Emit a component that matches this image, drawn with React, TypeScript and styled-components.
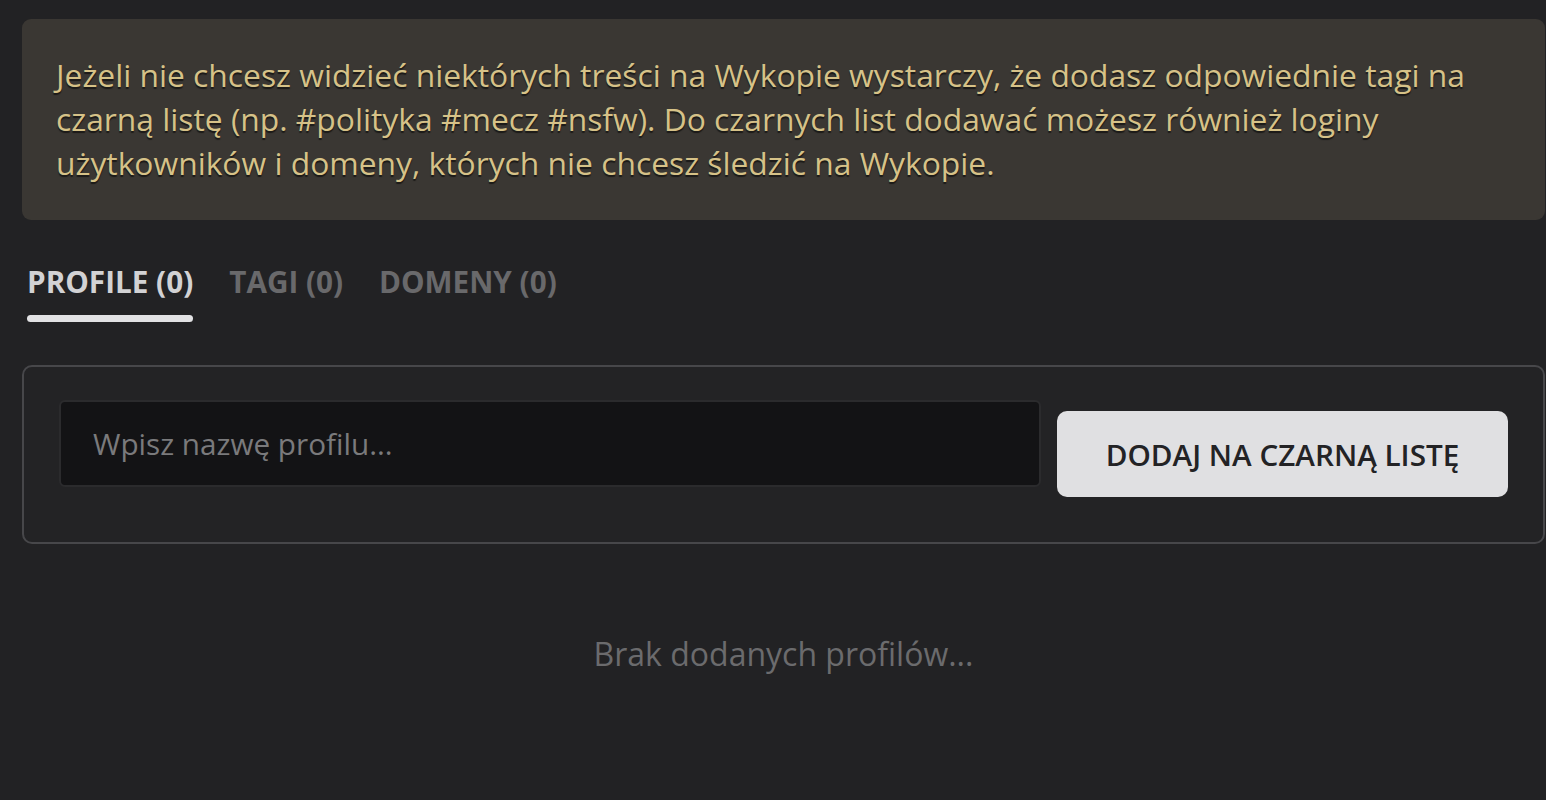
import React from "react";
import styled, { createGlobalStyle } from "styled-components";

const Global = createGlobalStyle`
  html, body { margin: 0; padding: 0; background: #222224; }
  body { font-family: "Open Sans", "Noto Sans", sans-serif; overflow: hidden; }
  * { box-sizing: border-box; }
`;

const Page = styled.div`
  width: 1546px;
  height: 800px;
  padding: 19px 1px 0 22px;
  background: #222224;
`;

const Notice = styled.div`
  background: #3a3733;
  border-radius: 9px;
  padding: 34px 34px 35px 34px;
  color: #d6c288;
  font-size: 31.8px;
  line-height: 44px;
  text-shadow: 0 2px 1px rgba(0, 0, 0, 0.55);
`;

const Tabs = styled.div`
  display: flex;
  gap: 36px;
  margin: 43px 0 0 5px;
`;

const Tab = styled.div<{ $active?: boolean }>`
  display: flex;
  flex-direction: column;
  font-size: 29.7px;
  line-height: 38px;
  font-weight: 700;
  color: ${(p) => (p.$active ? "#d2d2d4" : "#69696b")};
  cursor: pointer;
  &::after {
    content: "";
    display: block;
    height: 7px;
    margin-top: 14px;
    border-radius: 4px;
    background: ${(p) => (p.$active ? "#e2e2e4" : "transparent")};
  }
`;

const FormBox = styled.div`
  margin-top: 43px;
  border: 2px solid #47474a;
  border-radius: 10px;
  background: #232325;
  padding: 33px 35px 45px 35px;
  display: flex;
  align-items: flex-start;
  gap: 16px;
`;

const Input = styled.input`
  flex: 1;
  height: 87px;
  background: #131315;
  border: 2px solid #2b2b2d;
  border-radius: 6px;
  padding: 0 32px;
  font-family: "Open Sans", sans-serif;
  font-size: 29.7px;
  color: #ddd;
  outline: none;
  &::placeholder { color: #7a7a7c; }
`;

const Button = styled.button`
  margin-top: 11px;
  width: 451px;
  height: 86px;
  border: none;
  border-radius: 10px;
  background: #e0e0e2;
  color: #232325;
  font-family: "Open Sans", sans-serif;
  font-size: 29.7px;
  font-weight: 600;
  cursor: pointer;
`;

const Empty = styled.div`
  margin-top: 90px;
  text-align: center;
  font-size: 32px;
  line-height: 40px;
  color: #6b6b6d;
`;

export default function App() {
  return (
    <>
      <Global />
      <Page>
        <Notice>
          Jeżeli nie chcesz widzieć niektórych treści na Wykopie wystarczy, że dodasz odpowiednie tagi na
          <br />
          czarną listę (np. #polityka #mecz #nsfw). Do czarnych list dodawać możesz również loginy
          <br />
          użytkowników i domeny, których nie chcesz śledzić na Wykopie.
        </Notice>
        <Tabs>
          <Tab $active>PROFILE (0)</Tab>
          <Tab>TAGI (0)</Tab>
          <Tab>DOMENY (0)</Tab>
        </Tabs>
        <FormBox>
          <Input placeholder="Wpisz nazwę profilu..." />
          <Button>DODAJ NA CZARNĄ LISTĘ</Button>
        </FormBox>
        <Empty>Brak dodanych profilów...</Empty>
      </Page>
    </>
  );
}
